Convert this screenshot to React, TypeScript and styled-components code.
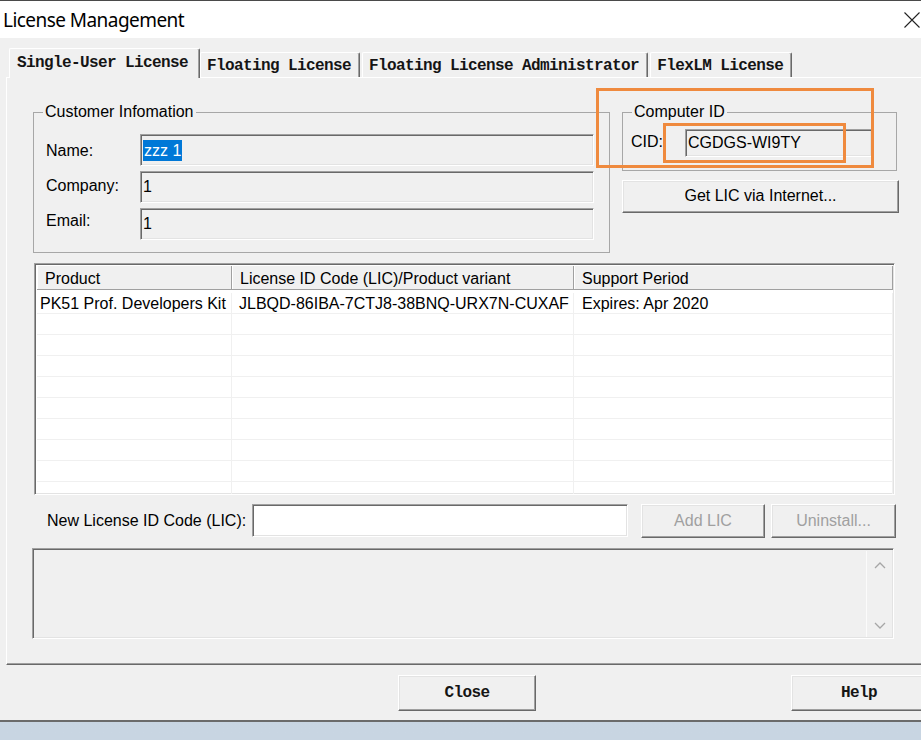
import React from "react";
import styled, { createGlobalStyle, css } from "styled-components";

const GlobalStyle = createGlobalStyle`
  html, body { margin: 0; padding: 0; background: #c3d0dd; }
  body { font-family: "Liberation Sans", Arial, sans-serif; font-size: 16px; color: #000; }
  * { box-sizing: border-box; }
`;

const sunken = css`
  border: 1px solid;
  border-color: #a0a0a0 #fff #fff #a0a0a0;
  box-shadow: inset 1px 1px 0 #696969, inset -1px -1px 0 #e3e3e3;
`;

const raised = css`
  border: 1px solid;
  border-color: #fff #696969 #696969 #fff;
  box-shadow: inset -1px -1px 0 #a0a0a0, inset 1px 1px 0 #e3e3e3;
  background: #f0f0f0;
`;

const Viewport = styled.div`
  width: 921px;
  height: 740px;
  overflow: hidden;
  background: linear-gradient(#a6b5c5, #cad7e4 40%, #c8d5e2);
`;

const Window = styled.div`
  position: relative;
  width: 936px;
  height: 722px;
  display: flex;
  flex-direction: column;
  background: #f0f0f0;
  border-top: 1px solid #4a4a4a;
  border-bottom: 2px solid #6b6b6b;
`;

const TitleBar = styled.div`
  height: 37px;
  flex: none;
  background: #fff;
  display: flex;
  align-items: center;
  justify-content: space-between;
  padding: 0 16px 0 3px;
`;

const Title = styled.div`
  font-family: "Noto Sans", "Liberation Sans", sans-serif;
  font-size: 19px;
  color: #000;
  letter-spacing: -0.55px;
`;

const CloseGlyph = styled.svg`
  display: block;
  margin-top: 1px;
`;

const Body = styled.div`
  flex: 1;
  display: flex;
  flex-direction: column;
  padding-top: 10px;
`;

const TabStrip = styled.div`
  height: 29px;
  display: flex;
  align-items: flex-end;
  gap: 2px;
  padding-left: 9px;
`;

const monoFace = css`
  font-family: "Liberation Mono", "Courier New", monospace;
  font-size: 16px;
  letter-spacing: -0.6px;
  font-weight: bold;
  color: #151515;
`;

const Tab = styled.div<{ $active?: boolean }>`
  ${monoFace};
  white-space: nowrap;
  display: flex;
  align-items: center;
  background: #f0f0f0;
  border-top: 1px solid #fff;
  border-left: 1px solid #fff;
  border-right: 1px solid #696969;
  box-shadow: inset -1px 0 0 #a0a0a0;
  border-radius: 2px 2px 0 0;
  ${(p) =>
    p.$active
      ? css`
          height: 30px;
          padding: 0 11px 1px 7px;
          margin-bottom: -1px;
          margin-right: -2px;
          position: relative;
          z-index: 1;
        `
      : css`
          height: 25px;
          padding: 1px 8px 0 6px;
        `}
`;

const Panel = styled.div`
  height: 588px;
  margin-left: 6px;
  margin-right: -10px;
  border-top: 1px solid #fff;
  border-left: 1px solid #fff;
  border-bottom: 1px solid #696969;
  box-shadow: inset 0 -1px 0 #a0a0a0;
  padding: 25px 0 0 26px;
  display: flex;
  flex-direction: column;
  align-items: flex-start;
`;

const TopRow = styled.div`
  display: flex;
  gap: 12px;
  align-items: flex-start;
`;

const Group = styled.fieldset<{ $w: number; $h: number; $pl: number }>`
  margin: 0;
  min-width: 0;
  width: ${(p) => p.$w}px;
  height: ${(p) => p.$h}px;
  border: 1px solid #a7a7a7;
  padding: 0 0 0 ${(p) => p.$pl}px;
`;

const Legend = styled.legend<{ $shift: number }>`
  padding: 0 2px;
  margin-left: ${(p) => p.$shift}px;
  font-size: 16px;
  line-height: 18px;
`;

const CustomerGrid = styled.div`
  display: grid;
  grid-template-columns: 94px 454px;
  row-gap: 5px;
  padding-top: 13px;
`;

const Label = styled.div<{ $lift?: number }>`
  align-self: center;
  margin-bottom: ${(p) => (p.$lift || 0) * 2}px;
  font-size: 16px;
  white-space: nowrap;
`;

const Field = styled.div<{ $w?: number; $h: number; $white?: boolean }>`
  ${sunken};
  width: ${(p) => (p.$w ? `${p.$w}px` : "auto")};
  height: ${(p) => p.$h}px;
  background: ${(p) => (p.$white ? "#fff" : "#f0f0f0")};
  padding: 0 0 0 2px;
  display: flex;
  align-items: center;
  font-size: 16px;
  white-space: nowrap;
`;

const Selected = styled.span`
  background: #0078d7;
  color: #fff;
  line-height: 21px;
  padding: 0 1px 0 1px;
`;

const RightCol = styled.div`
  width: 277px;
  display: flex;
  flex-direction: column;
  gap: 9px;
`;

const CidRow = styled.div`
  display: flex;
  align-items: center;
  padding-top: 8px;
`;

const CidLabel = styled.div`
  width: 54px;
  font-size: 16px;
  margin-bottom: 2px;
`;

const Button = styled.div<{ $w: number; $h: number; $disabled?: boolean; $mono?: boolean }>`
  ${raised};
  width: ${(p) => p.$w}px;
  height: ${(p) => p.$h}px;
  flex: none;
  display: flex;
  align-items: center;
  justify-content: center;
  padding-bottom: 1px;
  color: ${(p) => (p.$disabled ? "#a0a0a0" : "#000")};
  font-size: 16px;
  ${(p) => p.$mono && monoFace};
`;

const Table = styled.div`
  ${sunken};
  margin-top: 10px;
  margin-left: 1px;
  width: 861px;
  height: 232px;
  background: #fff;
  overflow: hidden;
  padding: 2px 1px 1px 2px;
`;

const HeaderRow = styled.div`
  display: grid;
  grid-template-columns: 195px 342px 1fr;
  height: 24px;
  background: #f0f0f0;
  border-bottom: 1px solid #a0a0a0;
`;

const HeaderCell = styled.div`
  display: flex;
  align-items: center;
  padding: 2px 0 0 8px;
  border-right: 1px solid #a0a0a0;
  box-shadow: inset 1px 0 0 #fff;
  font-size: 16px;
  white-space: nowrap;
  overflow: hidden;
`;

const Rows = styled.div`
  padding-top: 3px;
`;

const DataRow = styled.div`
  display: grid;
  grid-template-columns: 195px 342px 1fr;
  height: 21px;
  border-bottom: 1px solid #f0f0f0;
`;

const DataCell = styled.div<{ $pad: number }>`
  display: flex;
  align-items: center;
  padding: 2px 0 0 ${(p) => p.$pad}px;
  border-right: 1px solid #f0f0f0;
  font-size: 16px;
  white-space: nowrap;
  overflow: hidden;
`;

const NewRow = styled.div`
  margin-top: 9px;
  display: flex;
  align-items: flex-start;
`;

const NewLabel = styled.div`
  width: 219px;
  height: 33px;
  padding-left: 14px;
  display: flex;
  align-items: center;
  font-size: 16px;
  white-space: nowrap;
`;

const ButtonPair = styled.div`
  display: flex;
  gap: 6px;
  margin-left: 13px;
`;

const Memo = styled.div`
  ${sunken};
  margin-top: 10px;
  margin-left: -1px;
  width: 862px;
  height: 91px;
  background: #f0f0f0;
  display: flex;
  justify-content: flex-end;
  padding: 2px 1px 1px 2px;
`;

const ScrollTrack = styled.div`
  width: 26px;
  border-left: 1px solid #fbfbfb;
  display: flex;
  flex-direction: column;
  justify-content: space-between;
  align-items: center;
  padding: 10px 0 7px;
`;

const Footer = styled.div`
  flex: 1;
  display: flex;
  justify-content: flex-end;
  align-items: flex-start;
  gap: 255px;
  padding: 10px 9px 0 0;
`;

const Annotation = styled.div<{ $x: number; $y: number; $w: number; $h: number }>`
  position: absolute;
  left: ${(p) => p.$x}px;
  top: ${(p) => p.$y}px;
  width: ${(p) => p.$w}px;
  height: ${(p) => p.$h}px;
  border: 3px solid #ef8a3e;
  pointer-events: none;
`;

const emptyRows = Array.from({ length: 9 });

export default function App() {
  return (
    <>
      <GlobalStyle />
      <Viewport>
        <Window>
          <TitleBar>
            <Title>License Management</Title>
            <CloseGlyph width="16" height="16" viewBox="0 0 16 16">
              <path d="M0.5 0.5 L15.5 15.5 M15.5 0.5 L0.5 15.5" stroke="#222" strokeWidth="1.1" />
            </CloseGlyph>
          </TitleBar>
          <Body>
            <TabStrip>
              <Tab $active>Single-User License</Tab>
              <Tab>Floating License</Tab>
              <Tab>Floating License Administrator</Tab>
              <Tab>FlexLM License</Tab>
            </TabStrip>
            <Panel>
              <TopRow>
                <Group $w={577} $h={150} $pl={12}>
                  <Legend $shift={-3}>Customer Infomation</Legend>
                  <CustomerGrid>
                    <Label $lift={-1}>Name:</Label>
                    <Field $h={32}>
                      <Selected>zzz 1</Selected>
                    </Field>
                    <Label $lift={1}>Company:</Label>
                    <Field $h={32}>1</Field>
                    <Label $lift={3}>Email:</Label>
                    <Field $h={32}>1</Field>
                  </CustomerGrid>
                </Group>
                <RightCol>
                  <Group $w={275} $h={68} $pl={8}>
                    <Legend $shift={1}>Computer ID</Legend>
                    <CidRow>
                      <CidLabel>CID:</CidLabel>
                      <Field $w={187} $h={28}>CGDGS-WI9TY</Field>
                    </CidRow>
                  </Group>
                  <Button $w={277} $h={33}>Get LIC via Internet...</Button>
                </RightCol>
              </TopRow>
              <Table>
                <HeaderRow>
                  <HeaderCell>Product</HeaderCell>
                  <HeaderCell>License ID Code (LIC)/Product variant</HeaderCell>
                  <HeaderCell>Support Period</HeaderCell>
                </HeaderRow>
                <Rows>
                  <DataRow>
                    <DataCell $pad={3}>PK51 Prof. Developers Kit</DataCell>
                    <DataCell $pad={7}>JLBQD-86IBA-7CTJ8-38BNQ-URX7N-CUXAF</DataCell>
                    <DataCell $pad={8}>Expires: Apr 2020</DataCell>
                  </DataRow>
                  {emptyRows.map((_, i) => (
                    <DataRow key={i}>
                      <DataCell $pad={3} />
                      <DataCell $pad={7} />
                      <DataCell $pad={8} />
                    </DataRow>
                  ))}
                </Rows>
              </Table>
              <NewRow>
                <NewLabel>New License ID Code (LIC):</NewLabel>
                <Field $w={376} $h={33} $white />
                <ButtonPair>
                  <Button $w={124} $h={34} $disabled>Add LIC</Button>
                  <Button $w={125} $h={34} $disabled>Uninstall...</Button>
                </ButtonPair>
              </NewRow>
              <Memo>
                <ScrollTrack>
                  <svg width="12" height="8" viewBox="0 0 12 8">
                    <polyline points="1,7 6,2 11,7" fill="none" stroke="#a6a6a6" strokeWidth="1.3" />
                  </svg>
                  <svg width="12" height="8" viewBox="0 0 12 8">
                    <polyline points="1,1 6,6 11,1" fill="none" stroke="#a6a6a6" strokeWidth="1.3" />
                  </svg>
                </ScrollTrack>
              </Memo>
            </Panel>
            <Footer>
              <Button $w={138} $h={36} $mono>Close</Button>
              <Button $w={136} $h={36} $mono>Help</Button>
            </Footer>
          </Body>
          <Annotation $x={596} $y={87} $w={278} $h={80} />
          <Annotation $x={663} $y={122} $w={183} $h={40} />
        </Window>
      </Viewport>
    </>
  );
}
